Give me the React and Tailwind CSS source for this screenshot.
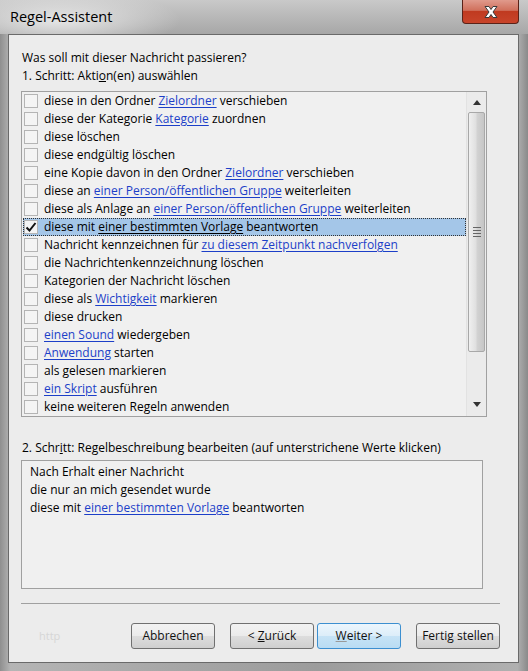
import React from 'react';

const font = { fontFamily: '"Open Sans", "Noto Sans", Arial, sans-serif' };

// l = link segment
const rows = [
  ['diese in den Ordner ', { l: 'Zielordner' }, ' verschieben'],
  ['diese der Kategorie ', { l: 'Kategorie' }, ' zuordnen'],
  ['diese löschen'],
  ['diese endgültig löschen'],
  ['eine Kopie davon in den Ordner ', { l: 'Zielordner' }, ' verschieben'],
  ['diese an ', { l: 'einer Person/öffentlichen Gruppe' }, ' weiterleiten'],
  ['diese als Anlage an ', { l: 'einer Person/öffentlichen Gruppe' }, ' weiterleiten'],
  ['diese mit ', { l: 'einer bestimmten Vorlage' }, ' beantworten'],
  ['Nachricht kennzeichnen für ', { l: 'zu diesem Zeitpunkt nachverfolgen' }],
  ['die Nachrichtenkennzeichnung löschen'],
  ['Kategorien der Nachricht löschen'],
  ['diese als ', { l: 'Wichtigkeit' }, ' markieren'],
  ['diese drucken'],
  [{ l: 'einen Sound' }, ' wiedergeben'],
  [{ l: 'Anwendung' }, ' starten'],
  ['als gelesen markieren'],
  [{ l: 'ein Skript' }, ' ausführen'],
  ['keine weiteren Regeln anwenden'],
];

const Segments = ({ parts, selected }) =>
  parts.map((p, i) =>
    typeof p === 'string' ? (
      <span key={i} className="whitespace-pre">{p}</span>
    ) : (
      <span
        key={i}
        className={`whitespace-pre underline underline-offset-2 ${selected ? 'text-black' : 'text-[#1c3fc8]'}`}
      >
        {p.l}
      </span>
    )
  );

const Checkbox = ({ checked }) => (
  <div className="w-[14px] h-[14px] border border-[#b4b4b4] bg-[#f4f4f4] flex items-center justify-center shrink-0">
    {checked && (
      <svg width="12" height="12" viewBox="0 0 12 12">
        <path d="M1.5 6.5 L4.5 9.5 L10.5 2" fill="none" stroke="#111" strokeWidth="2" />
      </svg>
    )}
  </div>
);

const Button = ({ children, primary }) => (
  <button
    className={`w-[84px] h-[26px] rounded-[3px] border text-[12px] text-[#111] ${
      primary
        ? 'border-[#3c8fd0] bg-[linear-gradient(#ecf6fd,#dcedf9_50%,#c6e3f6_51%,#b9dcf3)]'
        : 'border-[#707070] bg-[linear-gradient(#f2f2f2,#ebebeb_50%,#dddddd_51%,#cfcfcf)]'
    }`}
  >
    {children}
  </button>
);

export default function App() {
  return (
    <div
      className="w-[528px] h-[671px] flex flex-col bg-[linear-gradient(90deg,#8f8f8f,#b5b5b5_2%,#a8a8a8_30%,#9c9c9c_60%,#b0b0b0_98%,#8a8a8a)] overflow-hidden"
      style={font}
    >
      {/* Title bar */}
      <div className="h-[34px] shrink-0 flex items-start justify-between bg-[radial-gradient(ellipse_120px_30px_at_60px_20px,#e6e6e6,transparent),linear-gradient(#c9c9c9,#a7a7a7)]">
        <div className="pl-[10px] pt-[8px] text-[14.5px] leading-[18px] text-black">Regel-Assistent</div>
        <div className="mr-[9px] w-[57px] h-[24px] rounded-b-[4px] border border-t-0 border-[#5a2218] bg-[linear-gradient(#e09a8c,#d0705c_45%,#c03a20_50%,#c8442a)] flex items-center justify-center">
          <svg width="18" height="14" viewBox="0 0 18 14">
            <path
              d="M3 1.5 L7 1.5 L9 4.5 L11 1.5 L15 1.5 L11 7 L15 12.5 L11 12.5 L9 9.5 L7 12.5 L3 12.5 L7 7 Z"
              fill="#fff"
              stroke="#3a3a3a"
              strokeWidth="1"
              strokeLinejoin="round"
            />
          </svg>
        </div>
      </div>

      {/* Client area */}
      <div className="flex-1 ml-[8px] mr-[9px] mb-[8px] border border-[#6a6a6a] bg-[#ececec] flex flex-col pl-[12px] text-[12px] leading-[18px] text-black">
        <div className="pt-[14px] pl-[1px]">Was soll mit dieser Nachricht passieren?</div>
        <div className="pl-[1px]">
          1. Schritt: Akti<span className="underline">o</span>n(en) auswählen
        </div>

        {/* Action list */}
        <div className="mt-[6px] w-[466px] h-[326px] border border-[#a0a0a0] bg-[#f0f0f0] flex">
          <div className="flex-1 flex flex-col pl-[1px]">
            {rows.map((r, i) => {
              const selected = i === 7;
              return (
                <div
                  key={i}
                  className={`h-[18px] flex items-center gap-[6px] pl-[1px] ${
                    selected ? 'bg-[#a4c6e8] outline outline-1 outline-dotted outline-[#333] -outline-offset-1' : ''
                  }`}
                >
                  <Checkbox checked={selected} />
                  <div className="whitespace-nowrap">
                    <Segments parts={r} selected={selected} />
                  </div>
                </div>
              );
            })}
          </div>

          {/* Scrollbar */}
          <div className="w-[20px] flex flex-col items-center bg-[#ebebeb] border-l border-[#e2e2e2]">
            <div className="h-[20px] w-full flex items-center justify-center">
              <svg width="8" height="5" viewBox="0 0 8 5">
                <path d="M0 5 L4 0 L8 5 Z" fill="#333" />
              </svg>
            </div>
            <div className="w-[17px] h-[240px] rounded-[2px] border border-[#a8a8a8] bg-[linear-gradient(90deg,#f0f0f0,#e0e0e0_45%,#d2d2d2_55%,#c6c6c6)] flex flex-col items-center justify-center gap-[2px]">
              <div className="w-[8px] h-[1px] bg-[#666]" />
              <div className="w-[8px] h-[1px] bg-[#666]" />
              <div className="w-[8px] h-[1px] bg-[#666]" />
              <div className="w-[8px] h-[1px] bg-[#666]" />
            </div>
            <div className="flex-1" />
            <div className="h-[24px] w-full flex items-center justify-center">
              <svg width="8" height="5" viewBox="0 0 8 5">
                <path d="M0 0 L8 0 L4 5 Z" fill="#333" />
              </svg>
            </div>
          </div>
        </div>

        <div className="mt-[22px] pl-[1px]">
          2. Schr<span className="underline">i</span>tt: Regelbeschreibung bearbeiten (auf unterstrichene Werte klicken)
        </div>

        {/* Description */}
        <div className="mt-[3px] w-[462px] h-[129px] border border-[#a0a0a0] bg-[#f0f0f0] pl-[8px] pt-[2px]">
          <div>Nach Erhalt einer Nachricht</div>
          <div>die nur an mich gesendet wurde</div>
          <div>
            diese mit <span className="underline underline-offset-2 text-[#1c3fc8]">einer bestimmten Vorlage</span> beantworten
          </div>
        </div>

        <div className="mt-[14px] w-[479px] h-[2px] border-t border-[#a0a0a0] border-b-white" />

        {/* Buttons */}
        <div className="mt-[18px] w-[479px] flex items-center">
          <div className="w-[110px] pl-[18px] text-[11px] text-[#d6d6d6]">http</div>
          <Button>Abbrechen</Button>
          <div className="w-[15px]" />
          <Button>
            &lt; <span className="underline">Z</span>urück
          </Button>
          <div className="w-[3px]" />
          <Button primary>
            <span className="underline decoration-[#999]">W</span>eiter &gt;
          </Button>
          <div className="w-[15px]" />
          <Button>Fertig stellen</Button>
        </div>
      </div>
    </div>
  );
}
